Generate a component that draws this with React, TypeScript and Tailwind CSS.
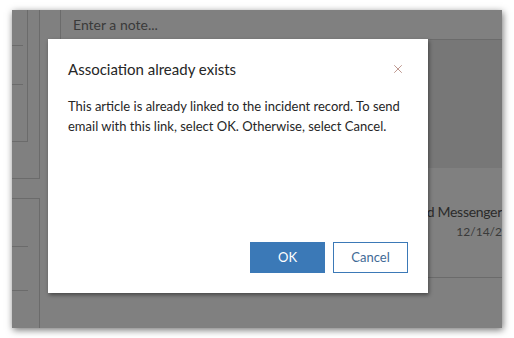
import { X } from 'lucide-react'

const font = { fontFamily: 'Lato, "Open Sans", sans-serif' }

export default function App() {
  return (
    <main className="w-[514px] h-[338px] bg-white pt-[10px] pl-[12px]" style={font}>
      {/* Dimmed page behind the dialog */}
      <div className="relative w-[490px] h-[318px] bg-[#808080] overflow-hidden flex shadow-[1px_2px_7px_rgba(0,0,0,0.55)]">
        {/* Left rail */}
        <div className="w-[28px] flex flex-col shrink-0">
          <div className="h-[169px] border-b border-r border-[#6b6b6b] flex flex-col">
            <div className="w-[16px] h-[132px] border-r border-b border-[#6b6b6b] relative">
              <div className="absolute left-0 top-[35px] w-[11px] border-t border-[#6b6b6b]" />
              <div className="absolute left-0 top-[74px] w-[11px] border-t border-[#6b6b6b]" />
            </div>
          </div>
          <div className="h-[19px]" />
          <div className="flex-1 border-t border-r border-[#6b6b6b] relative">
            <div className="absolute left-0 top-[47px] w-[16px] border-t border-[#6b6b6b]" />
            <div className="absolute left-0 top-[91px] w-[16px] border-t border-[#6b6b6b]" />
          </div>
        </div>

        <div className="w-[20px] shrink-0" />

        {/* Main column */}
        <div className="flex-1 flex flex-col">
          <div className="h-[30px] border-l border-b border-[#6b6b6b] flex items-center pl-[12px] text-[14px] text-[#3a3a3a]">
            Enter a note...
          </div>
          <div className="h-[128px] bg-[#777777]" />
          <div className="h-[110px] border-b border-[#6b6b6b] flex flex-col items-end pt-[34px]">
            <div className="whitespace-nowrap text-[14px] tracking-[-0.3px] leading-[20px] text-[#2b2b2b]">ed Messenger</div>
            <div className="whitespace-nowrap text-[12px] leading-[20px] text-[#3a3a3a]">12/14/2</div>
          </div>
        </div>

        {/* Dialog */}
        <div className="absolute left-[36px] top-[29px] w-[380px] h-[254px] bg-white shadow-[1px_2px_4px_rgba(0,0,0,0.45)] flex flex-col px-[20px] pb-[20px]">
          <div className="flex items-center justify-between pt-[19px] h-[41px]">
            <h1 className="text-[15px] leading-[22px] text-[#262626]">Association already exists</h1>
            <X className="w-[14px] h-[14px] mr-[3px] text-[#9a5f52]" strokeWidth={1.1} />
          </div>
          <p className="mt-[16px] text-[13px] leading-[20px] text-[#262626]">
            This article is already linked to the incident record. To send email with this link, select OK. Otherwise, select Cancel.
          </p>
          <div className="mt-auto flex justify-end gap-[8px]">
            <button className="w-[75px] h-[31px] bg-[#3b79b7] text-white text-[13px]">OK</button>
            <button className="w-[75px] h-[31px] bg-white border border-[#3b79b7] text-[#3f6a96] text-[13px]">Cancel</button>
          </div>
        </div>
      </div>
    </main>
  )
}
